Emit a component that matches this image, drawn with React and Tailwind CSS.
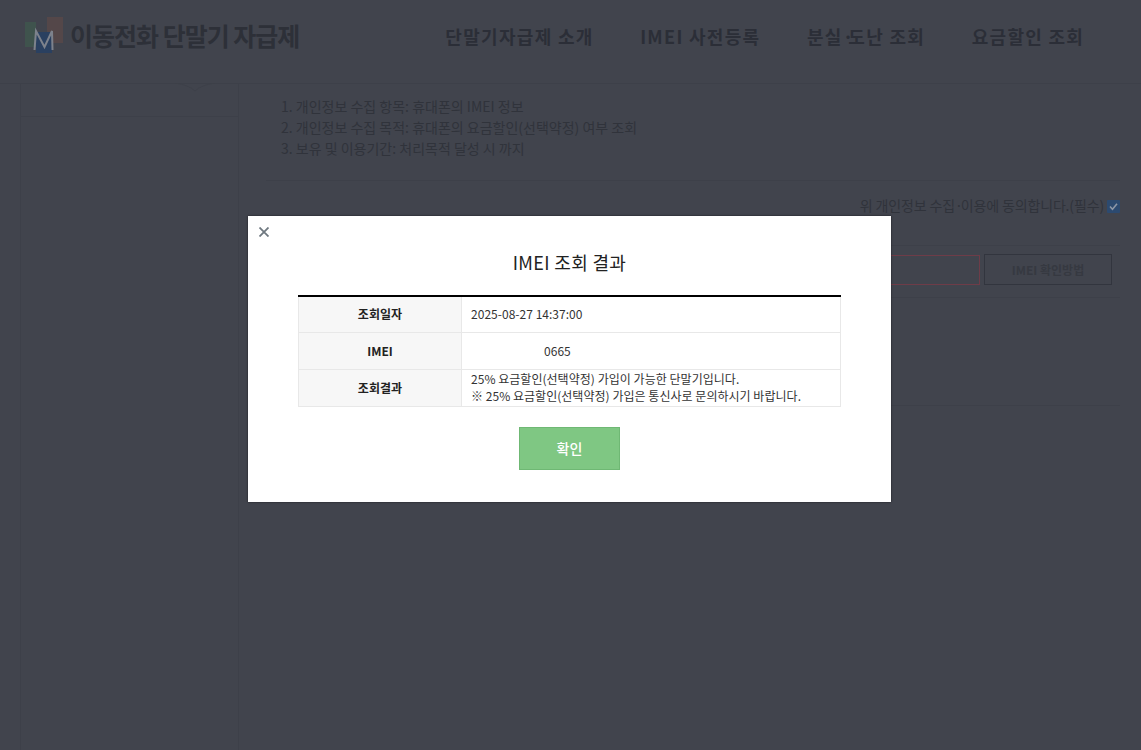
import React from 'react'

const font = { fontFamily: '"Noto Sans CJK KR", "Noto Sans", sans-serif' }

function Logo(){
  return (
    <svg width="38" height="37" viewBox="0 0 38 37" className="shrink-0">
      <rect x="0" y="5" width="11" height="25" fill="#3f534d" />
      <rect x="22" y="0" width="16" height="26" fill="#544749" />
      <rect x="11" y="15" width="16" height="21" fill="#2a4060" />
      <path d="M9.5 33 L11 14 L19.5 30 L27 14 L27.5 33" fill="none" stroke="#7d828c" strokeWidth="2" />
    </svg>
  )
}

function Header(){
  return (
    <header className="relative h-[84px] flex items-center border-b border-[#3d4049] pl-[25px]">
      <div className="flex items-center gap-[7px] -mt-[12px]">
        <Logo />
        <span className="text-[25px] font-bold text-[#2d3038] tracking-[-1px] whitespace-nowrap">이동전화 단말기 자급제</span>
      </div>
      <nav className="ml-[146px] flex gap-[46.5px] text-[18px] font-bold text-[#2b2e37] tracking-[1.3px] -mt-[11px] whitespace-nowrap">
        <a>단말기자급제 소개</a>
        <a>IMEI 사전등록</a>
        <a>분실<span className="tracking-[-5px]">·</span>도난 조회</a>
        <a>요금할인 조회</a>
      </nav>
      <svg width="40" height="10" viewBox="0 0 40 10" className="absolute left-[175px] top-[83px]">
        <path d="M0 0 Q14 2 20 8 Q26 2 40 0" fill="none" stroke="#3d4049" strokeWidth="1" />
      </svg>
    </header>
  )
}

function Content(){
  return (
    <main className="flex-1 border-l border-[#3d4049] pl-[27px] pr-[21px]">
      <ol className="pl-[15px] pt-[12px] text-[14px] leading-[21px] text-[#30333b] h-[96px]">
        <li>1. 개인정보 수집 항목: 휴대폰의 IMEI 정보</li>
        <li>2. 개인정보 수집 목적: 휴대폰의 요금할인(선택약정) 여부 조회</li>
        <li>3. 보유 및 이용기간: 처리목적 달성 시 까지</li>
      </ol>
      <div className="border-t border-[#3d4049] h-[65px] flex items-center justify-end gap-[3px] text-[14px] text-[#30333b] tracking-[-0.15px] pb-[16px]">
        <span>위 개인정보 수집<span className="tracking-[-2px]">·</span>이용에 동의합니다.(필수)</span>
        <span className="w-[13px] h-[13px] mt-[2px] rounded-[1px] bg-[#2c4a70] flex items-center justify-center">
          <svg width="11" height="11" viewBox="0 0 11 11"><path d="M2 5.5 L4.5 8.2 L9 2.8" fill="none" stroke="#8d97a6" strokeWidth="1.6" /></svg>
        </span>
      </div>
      <div className="border-t border-b border-[#3d4049] h-[53px] flex items-start justify-end gap-[4px] pt-[9px] pr-[8px]">
        <div className="w-[400px] h-[30px] border border-[#6e3c48]" />
        <button className="w-[128px] h-[31px] -mt-[1px] border border-[#32353e] text-[12px] font-bold text-[#363941]">IMEI 확인방법</button>
      </div>
      <div className="h-[108px] border-b border-[#3d4049]" />
    </main>
  )
}

function ResultTable(){
  return (
    <table className="w-[543px] border-collapse border-t-2 border-black text-[12px] text-[#333] leading-[17px] tracking-[0.03px]">
      <tbody>
        <tr className="h-[36px] border-b border-[#e8e8e8]">
          <th className="w-[163px] pb-[1px] bg-[#f7f7f7] border-l border-[#e8e8e8] font-bold text-[#222]">조회일자</th>
          <td className="pl-[9px] pb-[1px] border-l border-r border-[#e8e8e8]">2025-08-27 14:37:00</td>
        </tr>
        <tr className="h-[37px] border-b border-[#e8e8e8]">
          <th className="bg-[#f7f7f7] border-l border-[#e8e8e8] font-bold text-[#222]">IMEI</th>
          <td className="pl-[82px] border-l border-r border-[#e8e8e8]">0665</td>
        </tr>
        <tr className="h-[37px] border-b border-[#e8e8e8]">
          <th className="bg-[#f7f7f7] border-l border-[#e8e8e8] font-bold text-[#222]">조회결과</th>
          <td className="pl-[9px] pb-[2px] border-l border-r border-[#e8e8e8] whitespace-nowrap">
            25% 요금할인(선택약정) 가입이 가능한 단말기입니다.<br />
            ※ 25% 요금할인(선택약정) 가입은 통신사로 문의하시기 바랍니다.
          </td>
        </tr>
      </tbody>
    </table>
  )
}

function Modal(){
  return (
    <div className="absolute left-[248px] top-[216px] w-[643px] h-[286px] bg-white shadow-[0_0_2px_rgba(0,0,0,0.6)] flex flex-col items-center" style={font}>
      <button className="absolute left-[11px] top-[11px]">
        <svg width="10" height="10" viewBox="0 0 10 10"><path d="M0.5 0.5 L9.5 9.5 M9.5 0.5 L0.5 9.5" stroke="#6f7880" strokeWidth="1.8" /></svg>
      </button>
      <h2 className="mt-[32px] h-[47px] text-[18px] leading-[28px] text-[#222] tracking-[0.35px]">IMEI 조회 결과</h2>
      <ResultTable />
      <button className="mt-[20px] w-[101px] h-[43px] bg-[#7fc783] border border-[#6fb874] text-white text-[14px] font-medium">확인</button>
    </div>
  )
}

export default function App(){
  return (
    <div className="relative h-[750px] overflow-hidden bg-[#41444d]" style={font}>
      <Header />
      <div className="flex h-[666px] pl-[20px]">
        <aside className="w-[218px] border-l border-[#3d4049]">
          <div className="h-[33px] border-b border-[#3d4049]" />
        </aside>
        <Content />
      </div>
      <Modal />
    </div>
  )
}
